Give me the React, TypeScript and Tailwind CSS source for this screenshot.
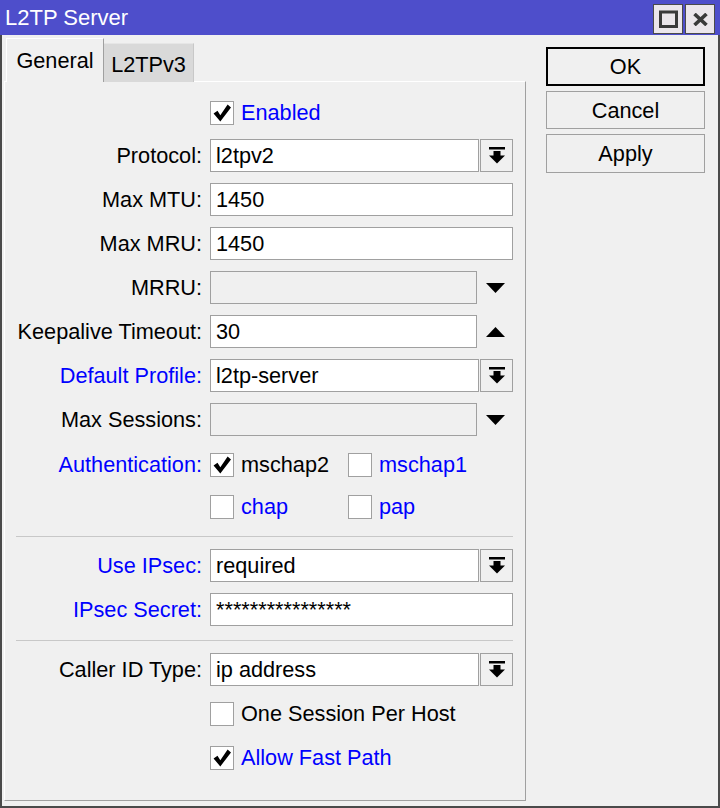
import React from 'react';

const BLUE = 'text-[#0000ff]';

function Check() {
  return (
    <svg width="18" height="18" viewBox="0 0 16 16">
      <polygon points="0.5,8.5 4,6 6.5,10 13,0.5 16,3 6.5,15.5" fill="#000" />
    </svg>
  );
}

function Checkbox({ checked, label, blue }: { checked?: boolean; label: string; blue?: boolean }) {
  return (
    <div className="flex items-center gap-[7px]">
      <div className="w-[24px] h-[24px] bg-white border border-[#a0a0a0] flex items-center justify-center">
        {checked && <Check />}
      </div>
      <span className={blue ? BLUE : 'text-black'}>{label}</span>
    </div>
  );
}

function DropIcon() {
  return (
    <svg width="16" height="17" viewBox="0 0 16 17">
      <rect x="0" y="0" width="16" height="2.5" fill="#000" />
      <rect x="4.5" y="4" width="7" height="5" fill="#000" />
      <polygon points="0,8.5 16,8.5 8,16.5" fill="#000" />
    </svg>
  );
}

function Row({ label, blue, children, className = '' }: { label?: string; blue?: boolean; children: React.ReactNode; className?: string }) {
  return (
    <div className={`flex items-center h-[33px] ${className}`}>
      <div className={`w-[197px] text-right pt-[1px] ${blue ? BLUE : 'text-black'}`}>{label}</div>
      <div className="ml-[8px] flex items-center">{children}</div>
    </div>
  );
}

function TextBox({ value, width = 303, disabled }: { value?: string; width?: number; disabled?: boolean }) {
  return (
    <div
      className={`h-[33px] border border-[#a0a0a0] pl-[5px] pt-[1px] flex items-center text-black ${disabled ? 'bg-[#f0f0f0]' : 'bg-white'}`}
      style={{ width }}
    >
      {value}
    </div>
  );
}

function Select({ value }: { value: string }) {
  return (
    <div className="flex gap-[1px]">
      <TextBox value={value} width={269} />
      <div className="w-[33px] h-[33px] border border-[#a0a0a0] bg-[#f0f0f0] flex items-center justify-center">
        <DropIcon />
      </div>
    </div>
  );
}

function Spin({ value, up }: { value?: string; up?: boolean }) {
  return (
    <div className="flex">
      <TextBox value={value} width={267} disabled={!up} />
      <div className="w-[36px] h-[33px] flex items-center justify-center">
        <svg width="19" height="10" viewBox="0 0 19 10">
          {up ? <polygon points="0,10 19,10 9.5,0" fill="#000" /> : <polygon points="0,0 19,0 9.5,10" fill="#000" />}
        </svg>
      </div>
    </div>
  );
}

function Separator({ className = '' }: { className?: string }) {
  return <div className={`ml-[11px] w-[497px] h-px bg-[#c8c8c8] ${className}`} />;
}

export default function App() {
  return (
    <div className="w-[720px] h-[808px] bg-[#f0f0f0] flex flex-col font-['Liberation_Sans',Arial,sans-serif] text-[21.7px] leading-none">
      {/* Title bar */}
      <div className="h-[35px] bg-[#4e4ecb] flex items-center pl-[5px] pr-[5px]">
        <span className="text-white text-[22px] pt-[1px]">L2TP Server</span>
        <div className="ml-auto flex gap-[2px] self-start mt-[4px]">
          <div className="w-[30px] h-[30px] bg-[#ebe6eb] border border-[#4a4a4a] flex items-center justify-center">
            <svg width="19" height="18" viewBox="0 0 19 18">
              <rect x="1.5" y="2" width="16" height="14.5" fill="none" stroke="#3a3a3a" strokeWidth="3" />
            </svg>
          </div>
          <div className="w-[30px] h-[30px] bg-[#ebe6eb] border border-[#4a4a4a] flex items-center justify-center">
            <svg width="15" height="13" viewBox="0 0 15 13">
              <path d="M1.5 1 L13.5 12 M13.5 1 L1.5 12" stroke="#3a3a3a" strokeWidth="3.6" />
            </svg>
          </div>
        </div>
      </div>

      {/* Body */}
      <div className="flex-1 flex border-x-2 border-b-2 border-[#4a4a4a]">
        <div className="ml-[2px] w-[522px] flex flex-col pt-[3px] pb-[5px]">
          {/* Tabs */}
          <div className="h-[44px] flex items-end ml-[2px] -mb-px relative z-10">
            <div className="h-[44px] w-[98px] pt-[1px] bg-[#f0f0f0] border-t border-l border-white border-r border-r-[#a0a0a0] flex items-center justify-center text-black">
              General
            </div>
            <div className="h-[39px] w-[90px] pt-[3px] bg-[#d9d9d9] border-t border-r border-[#c8c8c8] border-t-[#e6e6e6] flex items-center justify-center text-black">
              L2TPv3
            </div>
          </div>

          {/* Panel */}
          <div className="flex-1 border-t border-l border-white border-r border-b border-r-[#a0a0a0] border-b-[#a0a0a0] pt-[14px] flex flex-col">
            <Row>
              <Checkbox checked label="Enabled" blue />
            </Row>
            <Row label="Protocol:" className="mt-[10px]">
              <Select value="l2tpv2" />
            </Row>
            <Row label="Max MTU:" className="mt-[11px]">
              <TextBox value="1450" />
            </Row>
            <Row label="Max MRU:" className="mt-[11px]">
              <TextBox value="1450" />
            </Row>
            <Row label="MRRU:" className="mt-[11px]">
              <Spin />
            </Row>
            <Row label="Keepalive Timeout:" className="mt-[11px]">
              <Spin value="30" up />
            </Row>
            <Row label="Default Profile:" blue className="mt-[11px]">
              <Select value="l2tp-server" />
            </Row>
            <Row label="Max Sessions:" className="mt-[11px]">
              <Spin />
            </Row>
            <Row label="Authentication:" blue className="mt-[12px]">
              <div className="w-[138px]">
                <Checkbox checked label="mschap2" />
              </div>
              <Checkbox label="mschap1" blue />
            </Row>
            <Row className="mt-[9px]">
              <div className="w-[138px]">
                <Checkbox label="chap" blue />
              </div>
              <Checkbox label="pap" blue />
            </Row>

            <Separator className="mt-[13px]" />

            <Row label="Use IPsec:" blue className="mt-[12px]">
              <Select value="required" />
            </Row>
            <Row label="IPsec Secret:" blue className="mt-[11px]">
              <TextBox value="****************" />
            </Row>

            <Separator className="mt-[14px]" />

            <Row label="Caller ID Type:" className="mt-[12px]">
              <Select value="ip address" />
            </Row>
            <Row className="mt-[11px]">
              <Checkbox label="One Session Per Host" />
            </Row>
            <Row className="mt-[11px]">
              <Checkbox checked label="Allow Fast Path" blue />
            </Row>
          </div>
        </div>

        {/* Buttons */}
        <div className="ml-[20px] pt-[12px] w-[159px] flex flex-col gap-[5px]">
          <button className="h-[39px] pt-[1px] border-2 border-black bg-[#f0f0f0] text-black">OK</button>
          <button className="h-[38px] pt-[1px] border border-[#a0a0a0] bg-[#f0f0f0] text-black">Cancel</button>
          <button className="h-[39px] pt-[1px] border border-[#a0a0a0] bg-[#f0f0f0] text-black">Apply</button>
        </div>
      </div>
    </div>
  );
}
